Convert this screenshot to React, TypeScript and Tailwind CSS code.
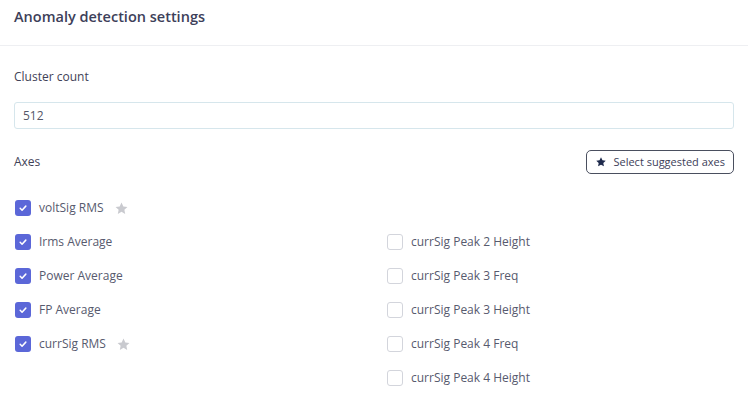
import React from "react";

const left = [
  { label: "voltSig RMS", star: true },
  { label: "Irms Average", star: false },
  { label: "Power Average", star: false },
  { label: "FP Average", star: false },
  { label: "currSig RMS", star: true },
];

const right = [
  "currSig Peak 2 Height",
  "currSig Peak 3 Freq",
  "currSig Peak 3 Height",
  "currSig Peak 4 Freq",
  "currSig Peak 4 Height",
];

const Star = ({ className }: { className: string }) => (
  <svg viewBox="0 0 24 24" className={className} fill="currentColor">
    <path d="M12 2.5l2.9 6.1 6.6.8-4.9 4.6 1.3 6.6L12 17.3l-5.9 3.3 1.3-6.6-4.9-4.6 6.6-.8z" />
  </svg>
);

const Check = ({ checked }: { checked: boolean }) =>
  checked ? (
    <div className="w-4 h-4 rounded-[3px] bg-[#5b67d8] flex items-center justify-center shrink-0">
      <svg viewBox="0 0 16 16" className="w-2.5 h-2.5" fill="none" stroke="white" strokeWidth="2.4" strokeLinecap="round" strokeLinejoin="round">
        <path d="M3.5 8.5l3 3 6-6.5" />
      </svg>
    </div>
  ) : (
    <div className="w-4 h-4 rounded-[3px] border border-[#d3d5dc] bg-white shrink-0"></div>
  );

const App: React.FC = () => {
  return (
    <div className="w-[748px] h-[396px] bg-white overflow-hidden" style={{ fontFamily: '"Open Sans", sans-serif' }}>
      <div className="h-[46px] border-b border-[#eeeff2] px-[14px] pt-[6px]">
        <h1 className="text-[14.5px] font-semibold text-[#3d4059] leading-[22px]">Anomaly detection settings</h1>
      </div>
      <div className="px-[14px] pt-[22px]">
        <p className="text-[12px] text-[#3f4257] leading-[18px]">Cluster count</p>
        <div className="mt-[16px] h-[27px] border border-[#d6e6ec] rounded-[3px] flex items-center px-[8px] text-[12px] text-[#555868]">
          512
        </div>
        <div className="mt-[21px] flex items-center justify-between">
          <p className="text-[12px] text-[#3f4257] leading-[18px]">Axes</p>
          <button className="h-[24px] px-[8px] border border-[#4a4f5f] rounded-[5px] flex items-center gap-[6px] text-[11px] text-[#3d4059]">
            <Star className="w-[12px] h-[12px] text-[#1e2a4c]" />
            Select suggested axes
          </button>
        </div>
        <div className="mt-[17px] grid grid-cols-2">
          <div className="flex flex-col">
            {left.map((item) => (
              <div key={item.label} className="h-[34px] flex items-center gap-[8px] pl-px">
                <Check checked={true} />
                <span className="text-[12px] text-[#575a6e]">{item.label}</span>
                {item.star && <Star className="w-[15px] h-[15px] text-[#c9cacf] ml-[2px]" />}
              </div>
            ))}
          </div>
          <div className="flex flex-col pt-[34px] pl-[13px]">
            {right.map((label) => (
              <div key={label} className="h-[34px] flex items-center gap-[8px]">
                <Check checked={false} />
                <span className="text-[12px] text-[#575a6e]">{label}</span>
              </div>
            ))}
          </div>
        </div>
      </div>
    </div>
  );
};

export default App;
